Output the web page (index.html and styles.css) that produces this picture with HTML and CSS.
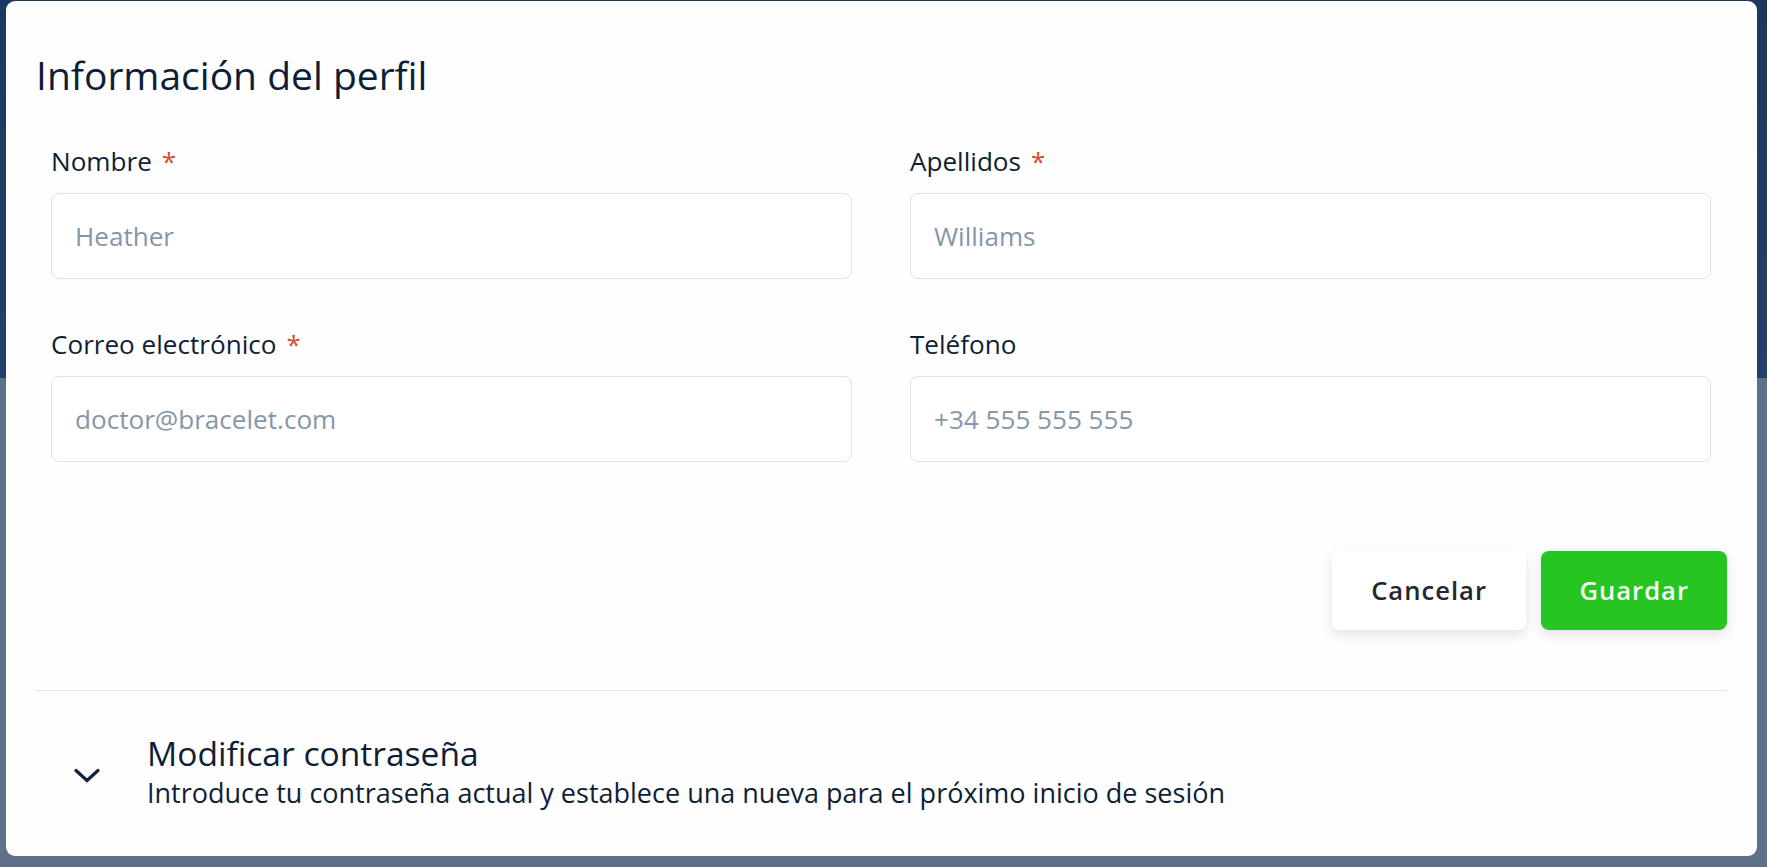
FILE: index.html
```html
<!DOCTYPE html>
<html lang="es">
<head>
<meta charset="utf-8">
<title>Información del perfil</title>
<link rel="stylesheet" href="styles.css">
</head>
<body>
<div class="card">
  <h1 class="card-title">Información del perfil</h1>
  <form class="form-grid">
    <div class="field">
      <label class="field-label">Nombre<span class="req">*</span></label>
      <input class="field-input" type="text" placeholder="Heather">
    </div>
    <div class="field">
      <label class="field-label">Apellidos<span class="req">*</span></label>
      <input class="field-input" type="text" placeholder="Williams">
    </div>
    <div class="field">
      <label class="field-label">Correo electrónico<span class="req">*</span></label>
      <input class="field-input" type="text" placeholder="doctor@bracelet.com">
    </div>
    <div class="field">
      <label class="field-label">Teléfono</label>
      <input class="field-input" type="text" placeholder="+34 555 555 555">
    </div>
  </form>
  <div class="actions">
    <button class="btn btn-cancel" type="button">Cancelar</button>
    <button class="btn btn-save" type="button">Guardar</button>
  </div>
  <div class="divider"></div>
  <div class="expander">
    <svg class="chevron" width="26" height="15" viewBox="0 0 26 15" aria-hidden="true">
      <polyline points="2,2.5 13,12.5 24,2.5" fill="none" stroke="#13233d" stroke-width="3.2" stroke-linecap="round" stroke-linejoin="miter"/>
    </svg>
    <div class="expander-text">
      <div class="expander-title">Modificar contraseña</div>
      <div class="expander-sub">Introduce tu contraseña actual y establece una nueva para el próximo inicio de sesión</div>
    </div>
  </div>
</div>
</body>
</html>
```

FILE: styles.css
```css
html, body {
  margin: 0;
  padding: 0;
}
body {
  font-family: "Open Sans", "Noto Sans", sans-serif;
  background: linear-gradient(to bottom, #1b395e 0, #21416a 378px, #5f7089 378px, #5f7089 100%);
  min-height: 867px;
  overflow: hidden;
}
.card {
  margin: 1px 10px 0 6px;
  background: #fefefe;
  border-radius: 9px;
  padding: 51px 30px 43.5px;
  box-sizing: border-box;
}
.card-title {
  margin: 0;
  font-size: 39px;
  line-height: 46px;
  font-weight: 400;
  color: #0f1e37;
}
.form-grid {
  margin: 43.6px 16px 0 15px;
  display: grid;
  grid-template-columns: 1fr 1fr;
  column-gap: 58px;
  row-gap: 46px;
}
.field {
  display: flex;
  flex-direction: column;
}
.field-label {
  font-size: 26.1px;
  line-height: 38.4px;
  color: #0f1e37;
  margin-bottom: 12.7px;
}
.req {
  color: #cf4f2f;
  margin-left: 10px;
}
.field-input {
  height: 86px;
  box-sizing: border-box;
  border: 1px solid #e1e2e6;
  border-radius: 8px;
  padding: 0 23px;
  font-family: "Open Sans", "Noto Sans", sans-serif;
  font-size: 26.1px;
  color: #0f1e37;
  background: #fff;
  outline: none;
}
.field-input::placeholder {
  color: #8596ab;
  opacity: 1;
}
.actions {
  margin-top: 89.3px;
  display: flex;
  justify-content: flex-end;
  gap: 15px;
}
.btn {
  height: 79px;
  border: none;
  border-radius: 8px;
  padding: 0 39.5px;
  font-family: "Open Sans", "Noto Sans", sans-serif;
  font-size: 25.6px;
  font-weight: 600;
  letter-spacing: 1px;
  box-shadow: 0 5px 12px rgba(40, 50, 70, 0.13);
  cursor: pointer;
}
.btn-cancel {
  background: #fff;
  color: #23262c;
}
.btn-save {
  background: #26c522;
  color: #f4fbf3;
  padding: 0 38px;
}
.divider {
  margin-top: 60px;
  height: 1px;
  background: #e2e3e5;
}
.expander {
  margin-top: 43px;
  display: flex;
  align-items: center;
  padding-left: 38px;
  gap: 47px;
}
.chevron {
  flex: none;
  margin-top: 4px;
}
.expander-title {
  font-size: 33.6px;
  line-height: 38.4px;
  font-weight: 400;
  color: #0f1e37;
}
.expander-sub {
  font-size: 27px;
  line-height: 38.4px;
  margin-top: 1.5px;
  color: #0f1e37;
}
```
